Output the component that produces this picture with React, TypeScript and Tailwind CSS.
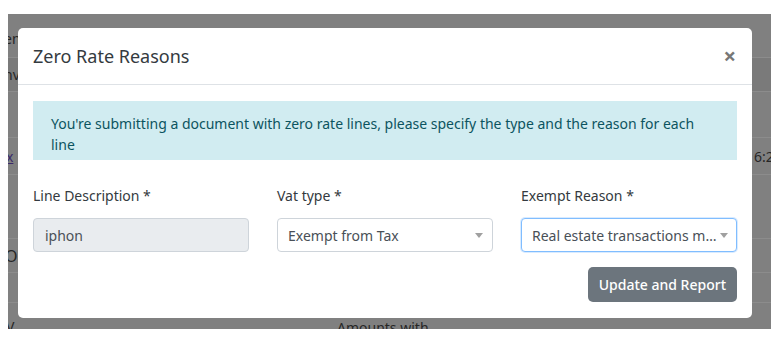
import React from 'react';

const font = { fontFamily: '"Noto Sans", "Open Sans", sans-serif' };

function Caret() {
  return (
    <svg width="8" height="5" viewBox="0 0 8 5" className="shrink-0">
      <path d="M0 0 L8 0 L4 5 Z" fill="#a0a0a0" />
    </svg>
  );
}

function Field({ label, children }: { label: string; children: React.ReactNode }) {
  return (
    <div className="flex flex-col">
      <label className="text-[14px] leading-[21px] text-[#343a40] mb-[12px]">{label}</label>
      {children}
    </div>
  );
}

export default function App() {
  return (
    <div className="bg-white w-[779px] h-[352px] pt-[14px] pl-[8px]" style={font}>
      <div className="relative w-[763px] h-[315px] bg-[#808080] overflow-hidden">
        {/* page behind the overlay */}
        <div className="absolute inset-0 text-[14px] text-[#262626]">
          <div className="absolute left-0 right-0 top-[43px] h-[35px] bg-[#7a7a7a] border-y border-[#8c8c8c]" />
          <div className="absolute left-0 right-0 top-[123px] h-[38px] border-y border-[#8c8c8c]" />
          <div className="absolute left-0 right-0 top-[224px] h-[35px] border-y border-[#8c8c8c]" />
          <div className="absolute left-0 right-0 top-[288px] border-t border-[#8c8c8c]" />
          <span className="absolute left-[-4px] top-[14px]">en</span>
          <span className="absolute left-[-4px] top-[50px]">nv</span>
          <span className="absolute left-[-2px] top-[132px] text-[#3a2a6a] underline">x</span>
          <span className="absolute left-[-3px] top-[230px] text-[16px]">O</span>
          <span className="absolute left-[-2px] top-[302px]">V</span>
          <span className="absolute left-[746px] top-[132px]">6:2</span>
          <span className="absolute left-[329px] top-[303px]">Amounts with</span>
        </div>

        {/* modal */}
        <div className="relative ml-[10px] mt-[14px] w-[734px] h-[290px] bg-white rounded-[5px] text-[#212529]">
          <div className="h-[57px] border-b border-[#dee2e6] flex items-center justify-between pl-[15px] pr-[16px]">
            <h5 className="text-[18px] leading-[27px] text-[#343a40]">Zero Rate Reasons</h5>
            <span className="text-[22px] font-bold text-[#777] leading-none mt-[-2px]">×</span>
          </div>
          <div className="px-[15px] pt-[16px]">
            <div className="bg-[#d1ecf1] text-[#0c5460] text-[14px] leading-[21px] pl-[18px] pr-[20px] pt-[12px] pb-[5px]">
              You're submitting a document with zero rate lines, please specify the type and the reason for each line
            </div>
            <div className="grid grid-cols-3 gap-x-[28px] mt-[25px]">
              <Field label="Line Description *">
                <div className="h-[34px] rounded-[4px] border border-[#ced4da] bg-[#e9ecef] px-[11px] flex items-center text-[14px] text-[#495057]">
                  iphon
                </div>
              </Field>
              <Field label="Vat type *">
                <div className="h-[34px] rounded-[4px] border border-[#ced4da] bg-white pl-[10px] pr-[9px] flex items-center justify-between text-[14px] text-[#495057]">
                  <span>Exempt from Tax</span>
                  <Caret />
                </div>
              </Field>
              <Field label="Exempt Reason *">
                <div className="h-[34px] rounded-[4px] border border-[#80bdff] shadow-[0_0_0_1px_rgba(0,123,255,0.15)] bg-white pl-[10px] pr-[8px] flex items-center text-[14px] text-[#495057]">
                  <span className="truncate min-w-0 flex-1">Real estate transactions mentioned in Article</span>
                  <Caret />
                </div>
              </Field>
            </div>
            <div className="flex justify-end mt-[15px]">
              <button className="h-[35px] px-[11px] rounded-[5px] bg-[#6c757d] text-white text-[14px] font-medium">
                Update and Report
              </button>
            </div>
          </div>
        </div>
      </div>
    </div>
  );
}
